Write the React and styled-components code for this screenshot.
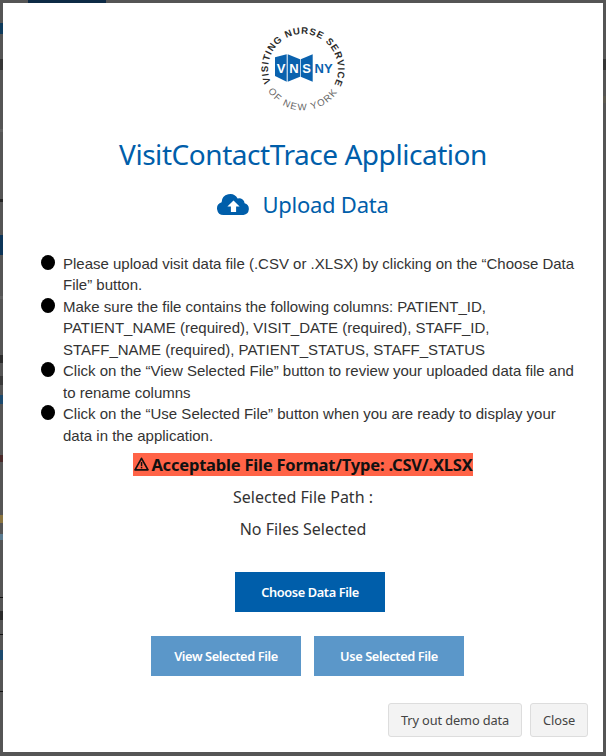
import React from 'react'
import styled, { createGlobalStyle } from 'styled-components'

const Global = createGlobalStyle`
  html, body { margin: 0; padding: 0; height: 100%; background: #555; }
  * { box-sizing: border-box; }
`

const Backdrop = styled.div`
  width: 606px;
  height: 756px;
  background: #555;
  padding: 3px 3px 4px 3px;
  position: relative;
  overflow: hidden;
  font-family: "Noto Sans", "Open Sans", sans-serif;
`

const PageTab = styled.div`
  position: absolute;
  top: 0;
  left: 28px;
  width: 78px;
  height: 3px;
  background: #0d2a45;
`

// bits of the dimmed page that show beside the modal
const PageBit = styled.div`
  position: absolute;
  ${p => (p.$right ? 'right: 0;' : 'left: 0;')}
  top: ${p => p.$top}px;
  width: 3px;
  height: ${p => p.$h}px;
  background: ${p => p.$color};
`

const Modal = styled.div`
  width: 600px;
  height: 749px;
  background: #fff;
  display: flex;
  flex-direction: column;
  align-items: center;
  padding-top: 21px;
`

const Title = styled.h1`
  margin: 19px 0 0;
  font-size: 28px;
  line-height: 38px;
  font-weight: 400;
  color: #005eaa;
  letter-spacing: -0.45px;
`

const SubTitle = styled.h2`
  margin: 16px 0 0;
  display: flex;
  align-items: center;
  gap: 12px;
  font-size: 22px;
  line-height: 30px;
  font-weight: 400;
  color: #005eaa;
  letter-spacing: -0.25px;
`

const Steps = styled.ul`
  list-style: none;
  margin: 34px 0 0;
  padding: 0 20px 0 38px;
  width: 100%;
  font-family: "Liberation Sans", Arial, sans-serif;
  font-size: 15px;
  line-height: 21.43px;
  color: #333;
`

const Step = styled.li`
  display: flex;
  gap: 8px;
`

const Dot = styled.span`
  flex: none;
  width: 14px;
  height: 15px;
  margin-top: 2px;
  border-radius: 50%;
  background: #000;
`

const Warning = styled.div`
  margin-top: 7px;
  display: flex;
  align-items: center;
  gap: 2px;
  height: 23px;
  padding: 0 0 0 1px;
  background: #ff6347;
  color: #111;
  font-size: 16.5px;
  font-weight: 700;
  letter-spacing: -0.2px;
`

const InfoLine = styled.p`
  margin: 10px 0 0;
  font-size: 16px;
  line-height: 22px;
  color: #333;
`

const ButtonRow = styled.div`
  display: flex;
  justify-content: center;
  gap: 13px;
  margin-top: ${p => p.$top}px;
  margin-left: ${p => p.$shift}px;
`

const ActionButton = styled.button`
  width: 150px;
  height: 40px;
  border: 0;
  padding: 0;
  font-family: inherit;
  font-size: 12.8px;
  font-weight: 600;
  letter-spacing: -0.38px;
  color: #fff;
  background: ${p => (p.$muted ? '#5b97c9' : '#005eaa')};
`

const Footer = styled.div`
  align-self: stretch;
  display: flex;
  justify-content: flex-end;
  gap: 8px;
  margin-top: 27px;
  padding-right: 15px;
`

const GhostButton = styled.button`
  height: 34px;
  padding: 0 12px;
  font-family: inherit;
  font-size: 12.8px;
  letter-spacing: -0.12px;
  color: #444;
  background: #f3f3f3;
  border: 1px solid #ddd;
  border-radius: 3px;
`

const Logo = () => (
  <svg width="92" height="92" viewBox="0 0 92 92">
    <defs>
      <path id="topArc" d="M13.8 58.7 A35 35 0 1 1 78.2 58.7" />
      <path id="bottomArc" d="M11 67 A41.3 41.3 0 0 0 81 67" />
    </defs>
    <text fontFamily="Liberation Sans, sans-serif" fontSize="9.6" fontWeight="700" fill="#2b2b2b" letterSpacing="0.85">
      <textPath href="#topArc">VISITING NURSE SERVICE</textPath>
    </text>
    <text fontFamily="Liberation Sans, sans-serif" fontSize="9.6" fill="#666" letterSpacing="1.35">
      <textPath href="#bottomArc">OF NEW YORK</textPath>
    </text>
    <path d="M18 33.3 L29.7 30.3 L29.7 57.7 L18 52 Z" fill="#0a62ae" />
    <path d="M30.7 30.3 L43 35.3 L43 52.7 L30.7 57.7 Z" fill="#0a62ae" />
    <path d="M43.7 35.3 L55.7 30.3 L55.7 57.7 L43.7 52.7 Z" fill="#0a62ae" />
    <text x="24" y="49" textAnchor="middle" fontFamily="Liberation Sans, sans-serif" fontSize="13" fontWeight="700" fill="#fff">V</text>
    <text x="37" y="49" textAnchor="middle" fontFamily="Liberation Sans, sans-serif" fontSize="13" fontWeight="700" fill="#fff">N</text>
    <text x="49.7" y="49" textAnchor="middle" fontFamily="Liberation Sans, sans-serif" fontSize="13" fontWeight="700" fill="#fff">S</text>
    <text x="57.5" y="49" fontFamily="Liberation Sans, sans-serif" fontSize="13" fontWeight="700" fill="#0a62ae">NY</text>
  </svg>
)

const CloudUpload = () => (
  <svg width="33" height="21" viewBox="0 0 33 21">
    <path fill="#005eaa" d="M6.5 21 A6.5 6.5 0 0 1 4.6 8.3 A8.5 8.5 0 0 1 20.6 4.6 A5.2 5.2 0 0 1 27.6 9.3 A6 6 0 0 1 26.5 21 Z" />
    <path fill="#fff" d="M16.5 6.5 L22.6 12.6 L19.1 12.6 L19.1 18 L13.9 18 L13.9 12.6 L10.4 12.6 Z" />
  </svg>
)

const WarningIcon = () => (
  <svg width="15" height="14" viewBox="0 0 15 14">
    <path d="M7.5 1.3 L14 12.8 L1 12.8 Z" fill="none" stroke="#111" strokeWidth="1.7" strokeLinejoin="round" />
    <rect x="6.8" y="5" width="1.5" height="4.2" fill="#111" />
    <rect x="6.8" y="9.9" width="1.5" height="1.5" fill="#111" />
  </svg>
)

const steps = [
  <>Please upload visit data file (.CSV or .XLSX) by clicking on the “Choose Data File” button.</>,
  <>Make sure the file contains the following columns: PATIENT_ID, PATIENT_NAME (required), VISIT_DATE (required), STAFF_ID, STAFF_NAME (required), PATIENT_STATUS, STAFF_STATUS</>,
  <>Click on the “View Selected File” button to review your uploaded data file and to rename columns</>,
  <>Click on the “Use Selected File” button when you are ready to display your data in the application.</>,
]

const pageBits = [
  { top: 23, h: 11, color: '#0f3b5c' },
  { top: 59, h: 11, color: '#353535' },
  { top: 129, h: 3, color: '#606060' },
  { top: 199, h: 3, color: '#262626' },
  { top: 235, h: 20, color: '#0d3558' },
  { top: 296, h: 3, color: '#606060' },
  { top: 355, h: 8, color: '#2c2c2c' },
  { top: 376, h: 9, color: '#3a3a3a' },
  { top: 395, h: 9, color: '#1c4a6e' },
  { top: 455, h: 7, color: '#4a2a2a' },
  { top: 515, h: 8, color: '#8a7440' },
  { top: 534, h: 6, color: '#5c7c90' },
  { top: 597, h: 1, color: '#111' },
  { top: 611, h: 9, color: '#2a2a2a' },
  { top: 634, h: 1, color: '#111' },
  { top: 650, h: 10, color: '#1c4a6e' },
  { top: 691, h: 1, color: '#111' },
  { top: 59, h: 11, color: '#353535', right: true },
  { top: 96, h: 7, color: '#5d5a50', right: true },
]

export default function App() {
  return (
    <>
      <Global />
      <Backdrop>
        <PageTab />
        {pageBits.map((b, i) => (
          <PageBit key={i} $top={b.top} $h={b.h} $color={b.color} $right={b.right} />
        ))}
        <Modal>
          <Logo />
          <Title>VisitContactTrace Application</Title>
          <SubTitle><CloudUpload />Upload Data</SubTitle>
          <Steps>
            {steps.map((s, i) => (
              <Step key={i}><Dot /><span>{s}</span></Step>
            ))}
          </Steps>
          <Warning><WarningIcon />Acceptable File Format/Type: .CSV/.XLSX</Warning>
          <InfoLine>Selected File Path :</InfoLine>
          <InfoLine>No Files Selected</InfoLine>
          <ButtonRow $top={32} $shift={14}>
            <ActionButton>Choose Data File</ActionButton>
          </ButtonRow>
          <ButtonRow $top={24} $shift={9}>
            <ActionButton $muted>View Selected File</ActionButton>
            <ActionButton $muted>Use Selected File</ActionButton>
          </ButtonRow>
          <Footer>
            <GhostButton>Try out demo data</GhostButton>
            <GhostButton>Close</GhostButton>
          </Footer>
        </Modal>
      </Backdrop>
    </>
  )
}
